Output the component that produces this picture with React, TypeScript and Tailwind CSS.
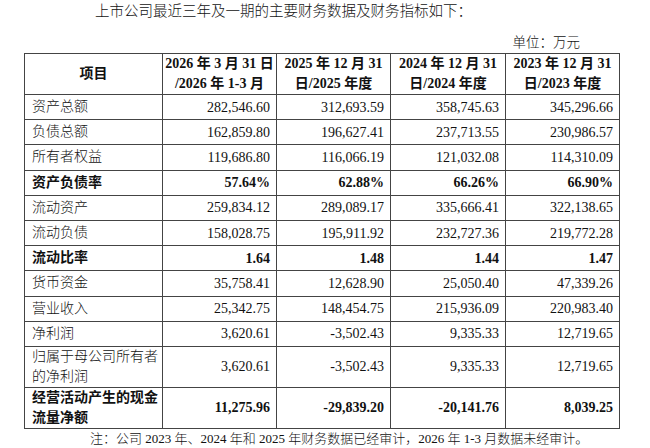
import React from "react";

const rows = [
  { name: ["资产总额"], vals: ["282,546.60", "312,693.59", "358,745.63", "345,296.66"] },
  { name: ["负债总额"], vals: ["162,859.80", "196,627.41", "237,713.55", "230,986.57"] },
  { name: ["所有者权益"], vals: ["119,686.80", "116,066.19", "121,032.08", "114,310.09"] },
  { name: ["资产负债率"], vals: ["57.64%", "62.88%", "66.26%", "66.90%"], bold: true },
  { name: ["流动资产"], vals: ["259,834.12", "289,089.17", "335,666.41", "322,138.65"] },
  { name: ["流动负债"], vals: ["158,028.75", "195,911.92", "232,727.36", "219,772.28"] },
  { name: ["流动比率"], vals: ["1.64", "1.48", "1.44", "1.47"], bold: true },
  { name: ["货币资金"], vals: ["35,758.41", "12,628.90", "25,050.40", "47,339.26"] },
  { name: ["营业收入"], vals: ["25,342.75", "148,454.75", "215,936.09", "220,983.40"] },
  { name: ["净利润"], vals: ["3,620.61", "-3,502.43", "9,335.33", "12,719.65"] },
  { name: ["归属于母公司所有者", "的净利润"], vals: ["3,620.61", "-3,502.43", "9,335.33", "12,719.65"] },
  { name: ["经营活动产生的现金", "流量净额"], vals: ["11,275.96", "-29,839.20", "-20,141.76", "8,039.25"], bold: true },
];

const heads = [
  ["2026 年 3 月 31 日", "/2026 年 1-3 月"],
  ["2025 年 12 月 31", "日/2025 年度"],
  ["2024 年 12 月 31", "日/2024 年度"],
  ["2023 年 12 月 31", "日/2023 年度"],
];

const font = "font-['Liberation_Serif','Noto_Sans_CJK_SC',serif]";

export default function App() {
  return (
    <div className={`w-[650px] h-[448px] bg-white text-[#111] font-light overflow-hidden ${font}`}>
      <p className="pl-[95px] pt-[1px] text-[14.5px] leading-[20px]">
        上市公司最近三年及一期的主要财务数据及财务指标如下：
      </p>
      <p className="mt-[13px] pr-[70px] text-right text-[13.5px] leading-[18px]">单位：万元</p>

      <table className="ml-[24px] mt-[1px] w-[595px] border-collapse border-[1.5px] border-black text-[14px] table-fixed">
        <colgroup>
          <col className="w-[138px]" />
          <col className="w-[114px]" />
          <col className="w-[114px]" />
          <col className="w-[115px]" />
          <col className="w-[114px]" />
        </colgroup>
        <thead>
          <tr className="h-[40px]">
            <th className="border border-[#444] font-bold text-center leading-[20px]">项目</th>
            {heads.map((h, i) => (
              <th key={i} className="border border-[#444] font-bold text-center leading-[20px]">
                <div>{h[0]}</div>
                <div>{h[1]}</div>
              </th>
            ))}
          </tr>
        </thead>
        <tbody>
          {rows.map((r, i) => (
            <tr key={i} className={r.name.length > 1 ? "h-[41px]" : "h-[25.2px]"}>
              <td className={`border border-[#444] pl-[7px] text-left leading-[20px] ${r.bold ? "font-bold" : ""}`}>
                {r.name.map((n, j) => (
                  <div key={j}>{n}</div>
                ))}
              </td>
              {r.vals.map((v, j) => (
                <td key={j} className={`border border-[#444] pr-[6px] text-right ${r.bold ? "font-bold" : ""}`}>
                  {v}
                </td>
              ))}
            </tr>
          ))}
        </tbody>
      </table>

      <p className="mt-[1px] pl-[90px] text-[13px] leading-[18px]">
        注：公司 2023 年、2024 年和 2025 年财务数据已经审计，2026 年 1-3 月数据未经审计。
      </p>
    </div>
  );
}
